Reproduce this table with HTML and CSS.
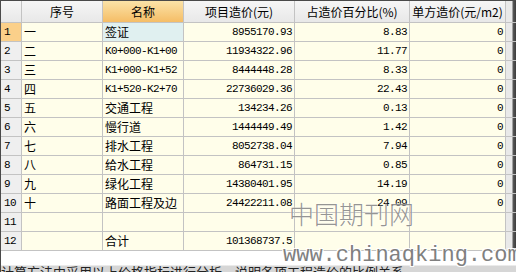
FILE: index.html
```html
<!DOCTYPE html>
<html lang="zh">
<head>
<meta charset="utf-8">
<link rel="stylesheet" href="styles.css">
</head>
<body>
<div class="page">
  <div class="sheet">
    <div class="hd rh"></div>
    <div class="hd">序号</div>
    <div class="hd sel">名称</div>
    <div class="hd">项目造价(元)</div>
    <div class="hd">占造价百分比(%)</div>
    <div class="hd">单方造价(元/m2)</div>
    <div class="side"></div>

    <div class="rh cur">1</div><div class="c">一</div><div class="c act">签证</div><div class="c n">8955170.93</div><div class="c n">8.83</div><div class="c n">0</div><div class="side"></div>
    <div class="rh">2</div><div class="c">二</div><div class="c m">K0+000-K1+00</div><div class="c n">11934322.96</div><div class="c n">11.77</div><div class="c n">0</div><div class="side"></div>
    <div class="rh">3</div><div class="c">三</div><div class="c m">K1+000-K1+52</div><div class="c n">8444448.28</div><div class="c n">8.33</div><div class="c n">0</div><div class="side"></div>
    <div class="rh">4</div><div class="c">四</div><div class="c m">K1+520-K2+70</div><div class="c n">22736029.36</div><div class="c n">22.43</div><div class="c n">0</div><div class="side"></div>
    <div class="rh">5</div><div class="c">五</div><div class="c">交通工程</div><div class="c n">134234.26</div><div class="c n">0.13</div><div class="c n">0</div><div class="side"></div>
    <div class="rh">6</div><div class="c">六</div><div class="c">慢行道</div><div class="c n">1444449.49</div><div class="c n">1.42</div><div class="c n">0</div><div class="side"></div>
    <div class="rh">7</div><div class="c">七</div><div class="c">排水工程</div><div class="c n">8052738.04</div><div class="c n">7.94</div><div class="c n">0</div><div class="side"></div>
    <div class="rh">8</div><div class="c">八</div><div class="c">给水工程</div><div class="c n">864731.15</div><div class="c n">0.85</div><div class="c n">0</div><div class="side"></div>
    <div class="rh">9</div><div class="c">九</div><div class="c">绿化工程</div><div class="c n">14380401.95</div><div class="c n">14.19</div><div class="c n">0</div><div class="side"></div>
    <div class="rh">10</div><div class="c">十</div><div class="c">路面工程及边</div><div class="c n">24422211.08</div><div class="c n">24.09</div><div class="c n">0</div><div class="side"></div>
    <div class="rh">11</div><div class="c"></div><div class="c"></div><div class="c n"></div><div class="c n"></div><div class="c n"></div><div class="side"></div>
    <div class="rh">12</div><div class="c"></div><div class="c">合计</div><div class="c n">101368737.5</div><div class="c n"></div><div class="c n"></div><div class="side"></div>
  </div>
  <div class="foot"><span class="foottext">计算方法中采用以上价格指标进行分析，说明各项工程造价的比例关系</span></div>
  <div class="wm1">中国期刊网</div>
  <div class="wm2">www.chinaqking.com</div>
</div>
</body>
</html>
```
FILE: styles.css
```css
html, body {
  margin: 0;
  padding: 0;
  background: #ffffff;
}
.page {
  position: relative;
  width: 516px;
  height: 272px;
  overflow: hidden;
  font-family: "Noto Sans CJK SC", sans-serif;
  font-size: 12px;
  color: #000;
}
.sheet {
  display: grid;
  grid-template-columns: 20px 80px 80px 110px 114px 95px 10px;
  grid-template-rows: 21px repeat(12, 18px);
  gap: 1px;
  padding-bottom: 1px;
  background: #c3c3c3;
  border-top: 1px solid #4a4a4a;
  border-left: 1px solid #4a4a4a;
}
.hd {
  background: linear-gradient(#f6f6f6, #e8e8e8);
  display: flex;
  align-items: center;
  justify-content: center;
  line-height: 1;
  white-space: nowrap;
  overflow: hidden;
}
.hd.sel {
  background: linear-gradient(#fbe3a8, #f5bd66);
}
.rh {
  background: #efefef;
  display: flex;
  align-items: center;
  padding-left: 3px;
  font-family: "Liberation Mono", monospace;
  font-size: 11px;
  letter-spacing: -0.6px;
}
.rh.cur {
  background: #fbd08a;
}
.hd.rh {
  background: linear-gradient(#f6f6f6, #e8e8e8);
}
.c {
  background: #fffeea;
  display: flex;
  align-items: center;
  padding-left: 2px;
  white-space: nowrap;
  overflow: hidden;
  line-height: 1;
}
.c.act {
  background: #e0f0f0;
}
.c.m {
  font-family: "Liberation Mono", monospace;
  font-size: 11px;
  letter-spacing: -0.6px;
}
.c.n {
  justify-content: flex-end;
  padding-left: 0;
  padding-right: 2px;
  font-family: "Liberation Mono", monospace;
  font-size: 11px;
  letter-spacing: -0.6px;
}
.side {
  background: linear-gradient(90deg, #e9e9e9 0, #e9e9e9 6px, #5a5a5a 7px, #3c3c3c 10px);
}
.foot {
  height: 21px;
  background: linear-gradient(#ffffff 0, #ffffff 14px, #d6d6d6 15px);
  overflow: hidden;
  position: relative;
  border-left: 1px solid #4a4a4a;
}
.foottext {
  position: absolute;
  left: 0;
  top: 14px;
  white-space: nowrap;
  font-size: 13px;
  line-height: 14px;
  color: #222;
}
.wm1 {
  position: absolute;
  left: 289px;
  top: 201px;
  font-family: "Noto Sans CJK SC", sans-serif;
  font-weight: 300;
  font-size: 25px;
  line-height: 1;
  color: rgba(130, 130, 130, 0.85);
  text-shadow: 0 0 2px #fff;
}
.wm2 {
  position: absolute;
  left: 283px;
  top: 245px;
  font-family: "Liberation Mono", monospace;
  font-size: 22px;
  line-height: 1;
  color: #808080;
  text-shadow: 1px 1px 0 #fff, -1px -1px 0 #fff, 1px -1px 0 #fff, -1px 1px 0 #fff;
}
```
